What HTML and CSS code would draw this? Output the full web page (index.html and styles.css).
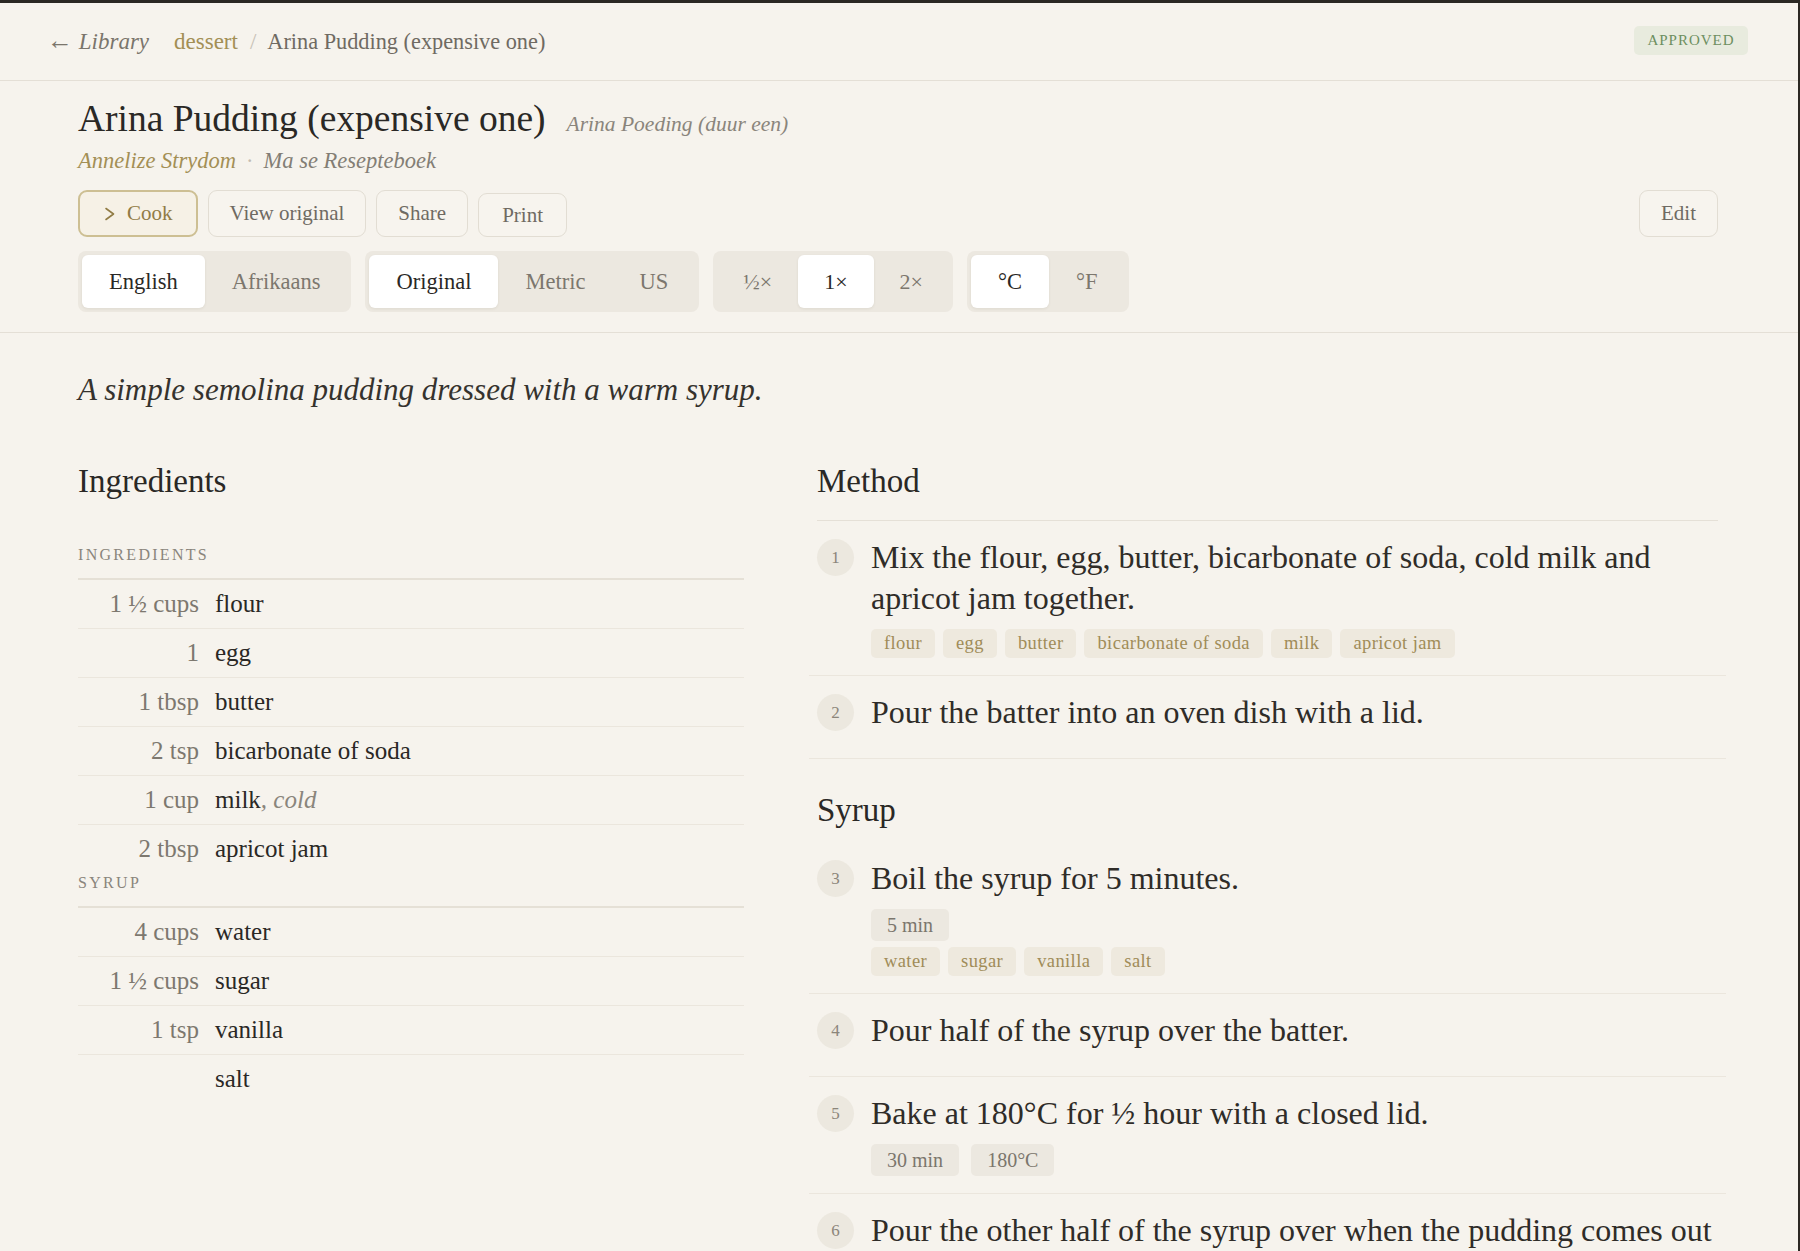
FILE: index.html
```html
<!DOCTYPE html>
<html>
   <head>
      <meta http-equiv="Content-Type" content="text/html; charset=UTF-8" />
      <title>Arina Pudding (expensive one)</title>
      <link rel="stylesheet" href="styles.css">
   </head>
   <body>
   <div class="page">
      <div class="topbar">
         <div class="crumbs">
            <span class="back"><span class="arrow">&larr;</span> Library</span>
            <span class="cat">dessert</span>
            <span class="sep">/</span>
            <span class="here">Arina Pudding (expensive one)</span>
         </div>
         <span class="badge">Approved</span>
      </div>

      <div class="hero">
         <div class="titlerow">
            <h1>Arina Pudding (expensive one)</h1>
            <span class="alt">Arina Poeding (duur een)</span>
         </div>
         <div class="byline"><span class="author">Annelize Strydom</span><span class="dot">&middot;</span><span class="book">Ma se Resepteboek</span></div>
         <div class="actions">
            <div class="btns">
               <button class="btn cook"><svg width="12" height="14" viewBox="0 0 12 14"><polyline points="2,1.5 9.5,7 2,12.5" fill="none" stroke="#917c45" stroke-width="1.6" stroke-linecap="round" stroke-linejoin="round"/></svg>Cook</button>
               <button class="btn">View original</button>
               <button class="btn">Share</button>
               <button class="btn print">Print</button>
            </div>
            <button class="btn">Edit</button>
         </div>
         <div class="toggles">
            <div class="seg"><span class="on">English</span><span>Afrikaans</span></div>
            <div class="seg"><span class="on">Original</span><span>Metric</span><span>US</span></div>
            <div class="seg scale"><span>&frac12;&times;</span><span class="on">1&times;</span><span>2&times;</span></div>
            <div class="seg"><span class="on">&deg;C</span><span>&deg;F</span></div>
         </div>
      </div>

      <div class="content">
         <p class="intro">A simple semolina pudding dressed with a warm syrup.</p>
         <div class="cols">
            <div class="ingredients">
               <h2>Ingredients</h2>
               <div class="group">
                  <div class="glabel">Ingredients</div>
                  <div class="row"><span class="qty">1 &frac12; cups</span><span class="name">flour</span></div>
                  <div class="row"><span class="qty">1</span><span class="name">egg</span></div>
                  <div class="row"><span class="qty">1 tbsp</span><span class="name">butter</span></div>
                  <div class="row"><span class="qty">2 tsp</span><span class="name">bicarbonate of soda</span></div>
                  <div class="row"><span class="qty">1 cup</span><span class="name">milk<em>, cold</em></span></div>
                  <div class="row"><span class="qty">2 tbsp</span><span class="name">apricot jam</span></div>
               </div>
               <div class="group">
                  <div class="glabel">Syrup</div>
                  <div class="row"><span class="qty">4 cups</span><span class="name">water</span></div>
                  <div class="row"><span class="qty">1 &frac12; cups</span><span class="name">sugar</span></div>
                  <div class="row"><span class="qty">1 tsp</span><span class="name">vanilla</span></div>
                  <div class="row"><span class="qty"></span><span class="name">salt</span></div>
               </div>
            </div>

            <div class="method">
               <h2 class="mhead">Method</h2>
               <div class="step">
                  <span class="num">1</span>
                  <div>
                     <p>Mix the flour, egg, butter, bicarbonate of soda, cold milk and apricot jam together.</p>
                     <div class="chips"><span class="tag">flour</span><span class="tag">egg</span><span class="tag">butter</span><span class="tag">bicarbonate of soda</span><span class="tag">milk</span><span class="tag">apricot jam</span></div>
                  </div>
               </div>
               <div class="step">
                  <span class="num">2</span>
                  <div><p>Pour the batter into an oven dish with a lid.</p></div>
               </div>

               <h3>Syrup</h3>
               <div class="step">
                  <span class="num">3</span>
                  <div>
                     <p>Boil the syrup for 5 minutes.</p>
                     <div class="chips"><span class="time">5 min</span></div>
                     <div class="chips"><span class="tag">water</span><span class="tag">sugar</span><span class="tag">vanilla</span><span class="tag">salt</span></div>
                  </div>
               </div>
               <div class="step">
                  <span class="num">4</span>
                  <div><p>Pour half of the syrup over the batter.</p></div>
               </div>
               <div class="step">
                  <span class="num">5</span>
                  <div>
                     <p>Bake at 180&deg;C for &frac12; hour with a closed lid.</p>
                     <div class="chips times"><span class="time">30 min</span><span class="time">180&deg;C</span></div>
                  </div>
               </div>
               <div class="step">
                  <span class="num">6</span>
                  <div><p>Pour the other half of the syrup over when the pudding comes out of the oven.</p></div>
               </div>
            </div>
         </div>
      </div>
   </div>
   </body>
</html>
```

FILE: styles.css
```css
html, body { margin:0; padding:0; background:#f6f3ed; }
body { font-family:'Liberation Serif','Times New Roman',serif; color:#2a2825; overflow:hidden; }
.page { border-top:3px solid #2b2823; border-right:2px solid #2b2823; min-height:100vh; box-sizing:border-box; }

/* top bar */
.topbar { height:77px; display:flex; align-items:center; justify-content:space-between; padding:0 50px 0 47px; border-bottom:1px solid #e4dfd6; }
.crumbs { font-size:23px; display:flex; align-items:baseline; margin-top:-2px; }
.back { font-style:italic; color:#7a756c; margin-right:25px; }
.arrow { font-style:normal; font-size:26px; }
.cat { color:#a38f55; }
.sep { color:#c8c2b7; margin:0 11px 0 12px; }
.here { color:#6f6a62; font-size:22.3px; }
.badge { text-transform:uppercase; font-size:15px; letter-spacing:1px; color:#6d8f60; background:#e8ebde; border-radius:5px; padding:0 12px; height:29px; line-height:29px; width:90px; text-align:center; margin-top:-3px; }

/* hero */
.hero { padding:16px 80px 20px 78px; border-bottom:1px solid #e4dfd6; }
.titlerow { display:flex; align-items:baseline; gap:21px; }
h1 { margin:0; font-size:37.5px; font-weight:normal; line-height:44px; }
.alt { font-style:italic; font-size:21.5px; color:#8a857c; }
.byline { margin-top:7px; font-size:22.5px; line-height:26px; font-style:italic; }
.author { color:#a38f55; }
.dot { color:#c2bcb1; margin:0 10px; font-style:normal; }
.book { color:#837e75; }
.actions { margin-top:16px; display:flex; justify-content:space-between; align-items:center; }
.btns { display:flex; gap:10px; }
.btn { font-family:inherit; font-size:21px; color:#6f6a62; background:#f7f4ee; border:1px solid #e2ddd3; border-radius:9px; height:47px; padding:0 21px; cursor:pointer; }
.btn.print { height:44px; margin-top:3px; padding:0 23px; }
.btn.cook { color:#917c45; border:2px solid #cdbf93; background:#f6f1e6; padding:0 23px 0 24px; display:flex; align-items:center; gap:11px; }
.toggles { margin-top:14px; display:flex; gap:14px; }
.seg { display:flex; background:#ece8e0; border-radius:8px; padding:4px; }
.seg span { font-size:22.5px; color:#7c776e; padding:0 27px; height:53px; line-height:53px; border-radius:6px; }
.seg.scale span { font-size:22px; padding:0 26px; }
.seg span.on { background:#fff; color:#2a2825; box-shadow:0 1px 3px rgba(60,50,30,.08); }

/* content */
.content { padding:36px 80px 0 78px; }
.intro { margin:0; font-style:italic; font-size:31px; line-height:41px; color:#35322d; }
.cols { margin-top:51px; display:grid; grid-template-columns:666px 1fr; column-gap:73px; }
h2 { margin:0; font-size:33px; font-weight:normal; line-height:40px; }
.ingredients h2 { margin-bottom:44px; }
.glabel { text-transform:uppercase; font-size:16px; letter-spacing:2.3px; color:#8a857c; line-height:20px; padding-bottom:13px; border-bottom:2px solid #e5e0d6; }
.row { display:grid; grid-template-columns:121px 1fr; column-gap:16px; font-size:25px; line-height:24px; padding:12px 0; }
.row + .row { border-top:1px solid #ebe6dd; }
.qty { text-align:right; color:#7d786f; }
.name em { color:#8a857c; }

.mhead { padding-bottom:19px; border-bottom:1px solid #e5e0d7; }
h3 { margin:31px 0 12px; font-size:33px; font-weight:normal; line-height:40px; }
.step { display:grid; grid-template-columns:37px 1fr; column-gap:17px; padding:16px 8px 25px; margin:0 -8px; border-bottom:1px solid #ebe6dd; }
.num { width:37px; height:37px; margin-top:2px; border-radius:50%; background:#ece8df; color:#8b857a; font-size:17px; text-align:center; line-height:37px; }
.step p { margin:0; font-size:32px; line-height:41px; color:#2f2c28; }
.chips { display:flex; flex-wrap:wrap; gap:8px; margin-top:10px; margin-bottom:-8px; }
.chips.times { gap:12px; }
.chips + .chips { margin-top:14px; }
.tag { font-size:18.5px; letter-spacing:.4px; color:#a08c58; background:#eee9de; border-radius:5px; height:29px; line-height:29px; padding:0 13px; }
.time { font-size:20px; color:#7b766d; background:#ece8e0; border-radius:5px; height:32px; line-height:32px; padding:0 16px; }
```
